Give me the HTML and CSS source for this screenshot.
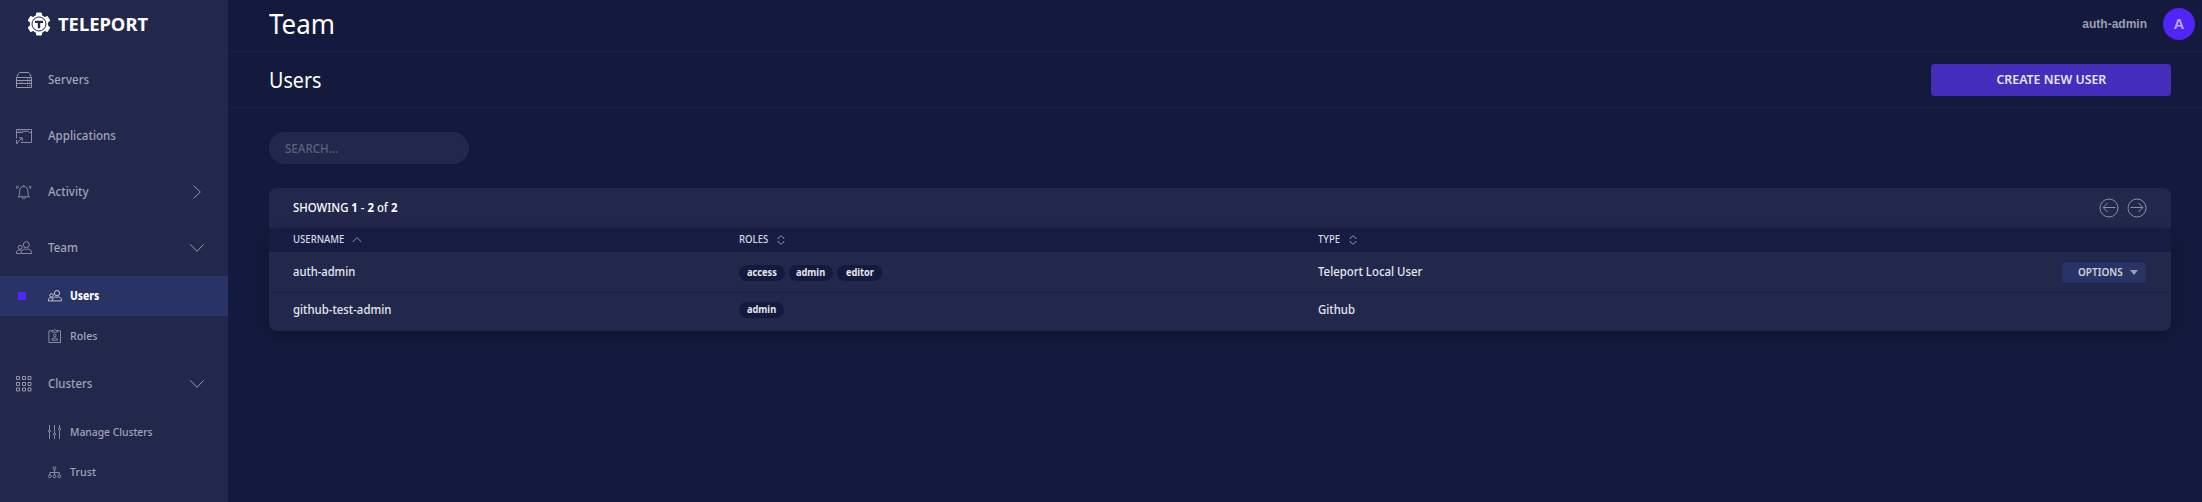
FILE: index.html
```
<!DOCTYPE html>
<html lang="en">
<head>
<meta charset="utf-8">
<title>Team</title>
<link rel="stylesheet" href="styles.css">
</head>
<body>
<svg class="defs" width="0" height="0">
  <symbol id="i-users" viewBox="0 0 16 16" fill="none" stroke="currentColor" stroke-width=".9">
    <circle cx="10.3" cy="4.7" r="3"/>
    <path d="M5.2 13.6v-1.3c0-2 2-3 3.700-3.300.8.5 2 .5 2.800 0 1.800.3 3.800 1.300 3.800 3.300v1.300z"/>
    <circle cx="4.100" cy="7.300" r="2"/>
    <path d="M5 13.600H.5v-1.300c0-1.400 1.200-2.100 2.600-2.400.6.4 1.500.4 2.100 0"/>
  </symbol>
  <symbol id="i-chevron" viewBox="0 0 14 14" fill="none" stroke="currentColor" stroke-width=".9">
    <path d="M.5 3.500 7 10.300l6.500-6.800"/>
  </symbol>
  <symbol id="i-sort" viewBox="0 0 8 10" fill="none" stroke="currentColor" stroke-width=".9">
    <path d="M1.100 4V3L4 .8 6.900 3v1M1.100 6v1L4 9.200 6.900 7V6"/>
  </symbol>
</svg>
<div class="app">
  <nav class="side">
    <div class="brand">
      <svg width="24" height="24" viewBox="0 0 24 24">
        <circle cx="12" cy="12" r="9.200" fill="#fff"/>
        <g fill="#fff">
          <rect id="tooth" x="9" y=".5" width="6" height="6" rx="1.200"/>
          <use href="#tooth" transform="rotate(60 12 12)"/>
          <use href="#tooth" transform="rotate(120 12 12)"/>
          <use href="#tooth" transform="rotate(180 12 12)"/>
          <use href="#tooth" transform="rotate(240 12 12)"/>
          <use href="#tooth" transform="rotate(300 12 12)"/>
        </g>
        <circle cx="12" cy="12" r="7" fill="none" stroke="#22274c" stroke-width="1"/>
        <path d="M8 8.700h8v2.300h-2.800v5.200h-2.400V11H8z" fill="#22274c"/>
      </svg>
      <span class="t logo">TELEPORT</span>
    </div>
    <a class="item">
      <svg width="16" height="16" viewBox="0 0 16 16" fill="none" stroke="currentColor" stroke-width="1"><path d="M.5 5.500h15v10H.5zM.5 8.500h15M.5 11.500h15M.8 5 2.500 1.500 3.500.5h9l1 1L15.200 5"/><path stroke-width=".8" d="M11 7h1m1 0h1m-3 3h1m1 0h1m-3 3.500h1m1 0h1M3.500 10h1m1 0h1"/></svg>
      <span class="t">Servers</span>
    </a>
    <a class="item">
      <svg width="16" height="16" viewBox="0 0 16 16" fill="none" stroke="currentColor" stroke-width=".9"><path d="M.5 10.500V1.500h15v13H4.500M.5 4.500h6l1.300-1.300h4.400l1.300 1.300h2M2 3h1m1 0h1m1 0h1M.8 15 6 10M3 9.800h3.300V13M.5 12v3.300H2"/></svg>
      <span class="t">Applications</span>
    </a>
    <a class="item">
      <svg width="16" height="16" viewBox="0 0 16 16" fill="none" stroke="currentColor" stroke-width=".9"><path d="M2 12.800h11.500c-1.400-1-1.600-2.300-1.600-5.300 0-3-1.500-5-4.150-5S3.600 4.500 3.600 7.500c0 3-.2 4.300-1.600 5.300zM6 13.200c.2 2 3.300 2 3.500 0M7.750 2.500V1M2.300 1.800C1.800 2.500 2 3.500 2.600 4M.6 1.800c-.2 1 .1 2.400.9 3.200M13.200 1.800c.5.7.3 1.700-.3 2.200m2-2.200c.2 1-.1 2.400-.9 3.200"/></svg>
      <span class="t">Activity</span>
      <svg class="arrow right" width="14" height="14"><use href="#i-chevron"/></svg>
    </a>
    <a class="item">
      <svg width="16" height="16"><use href="#i-users"/></svg>
      <span class="t">Team</span>
      <svg class="arrow" width="14" height="14"><use href="#i-chevron"/></svg>
    </a>
    <a class="sub active">
      <i class="mark"></i>
      <svg width="14" height="14"><use href="#i-users"/></svg>
      <span class="t">Users</span>
    </a>
    <a class="sub">
      <svg width="14" height="14" viewBox="0 0 14 14" fill="none" stroke="currentColor" stroke-width=".9"><path d="M4 1.800H.9v11.700h11.600V1.800H9.300M4 3.200V1.500h1.500c.2-1.200 2.200-1.200 2.400 0h1.500v1.700z"/><circle cx="6.700" cy="6.400" r="1.300"/><path d="M4 11.200V10c.6-1.400 4.800-1.400 5.400 0v1.200z"/></svg>
      <span class="t roles">Roles</span>
    </a>
    <a class="item">
      <svg width="16" height="16" viewBox="0 0 16 16" fill="none" stroke="currentColor" stroke-width="1"><path d="M.5.5h3v3h-3zM6.500.5h3v3h-3zM12 .5h3v3h-3zM.5 6.500h3v3h-3zM6.500 6.500h3v3h-3zM12 6.500h3v3h-3zM.5 12h3v3h-3zM6.500 12h3v3h-3zM12 12h3v3h-3z"/></svg>
      <span class="t clusters">Clusters</span>
      <svg class="arrow" width="14" height="14"><use href="#i-chevron"/></svg>
    </a>
    <a class="sub">
      <svg width="14" height="14" viewBox="0 0 14 14" fill="none" stroke="currentColor" stroke-width=".9"><path d="M1.500 0v5M1.500 7v7M6.500 0v8M6.500 10.200V14M11.500 0v3M11.500 5.200V14"/><circle cx="1.500" cy="6" r="1.100"/><circle cx="6.500" cy="9.100" r="1.100"/><circle cx="11.500" cy="4.100" r="1.100"/></svg>
      <span class="t manage">Manage Clusters</span>
    </a>
    <a class="sub">
      <svg width="14" height="14" viewBox="0 0 14 14" fill="none" stroke="currentColor" stroke-width=".9"><circle cx="6.500" cy="3.200" r="1.400"/><circle cx="1.900" cy="11.300" r="1.400"/><circle cx="6.500" cy="11.300" r="1.400"/><circle cx="11.300" cy="11.300" r="1.400"/><path d="M6.500 4.600v5.300M1.900 9.900V7.500h9.400v2.400"/></svg>
      <span class="t roles">Trust</span>
    </a>
  </nav>
  <main class="main">
    <header class="top">
      <h1 class="t">Team</h1>
      <div class="account"><span>auth-admin</span><b class="avatar">A</b></div>
    </header>
    <div class="head">
      <h2 class="t">Users</h2>
      <button class="create"><span class="t">CREATE NEW USER</span></button>
    </div>
    <div class="search"><span class="t">SEARCH...</span></div>
    <section class="panel">
      <div class="pager">
        <span class="t">SHOWING <b>1</b> - <b>2</b> of <b>2</b></span>
        <div class="nav">
          <svg width="20" height="20" viewBox="0 0 20 20" fill="none" stroke="currentColor"><circle cx="10" cy="10" r="9"/><path d="M16.500 9.500H4.500M8.500 5 4.200 9.500l4.300 4.500"/></svg>
          <svg width="20" height="20" viewBox="0 0 20 20" fill="none" stroke="currentColor"><circle cx="10" cy="10" r="9"/><path d="M3.500 9.500h12M11.500 5l4.300 4.500-4.300 4.500"/></svg>
        </div>
      </div>
      <div class="table">
        <div class="row thead">
          <div><span class="t">USERNAME</span><svg class="up" width="10" height="8" viewBox="0 0 10 8" fill="none" stroke="currentColor" stroke-width=".9"><path d="M.7 6 5 1.500 9.300 6"/></svg></div>
          <div><span class="t">ROLES</span><svg class="sort-roles" width="8" height="10"><use href="#i-sort"/></svg></div>
          <div><span class="t">TYPE</span><svg class="sort-type" width="8" height="10"><use href="#i-sort"/></svg></div>
          <div></div>
        </div>
        <div class="row first">
          <div><span class="t auth">auth-admin</span></div>
          <div class="pills"><span class="pill access"><span class="t">access</span></span><span class="pill admin"><span class="t">admin</span></span><span class="pill"><span class="t">editor</span></span></div>
          <div><span class="t">Teleport Local User</span></div>
          <div class="end"><button class="options"><span class="t">OPTIONS</span><i class="caret"></i></button></div>
        </div>
        <div class="row last">
          <div><span class="t">github-test-admin</span></div>
          <div class="pills"><span class="pill"><span class="t">admin</span></span></div>
          <div><span class="t">Github</span></div>
          <div></div>
        </div>
      </div>
    </section>
  </main>
</div>
</body>
</html>
```
FILE: styles.css
```
* { box-sizing: border-box; }
body {
  margin: 0;
  background: #141a3d;
  color: #fff;
  font: 13px/16px "Noto Sans", sans-serif;
}
.defs { position: absolute; }
.t {
  display: inline-block;
  white-space: nowrap;
  transform: scaleX(var(--s, .89));
  transform-origin: left center;
}
svg { flex: none; display: block; }
.app { display: flex; height: 502px; overflow: hidden; }

/* Sidebar */
.side { width: 228px; flex: none; background: #22274c; color: #a3a5b5; }
.side svg { opacity: .9; }
.brand { height: 52px; padding: 0 0 4px 27px; display: flex; align-items: center; gap: 7px; color: #fff; }
.brand svg { opacity: 1; }
.logo { --s: 1.05; font-size: 17.5px; font-weight: 700; line-height: 24px; padding-bottom: 1px; }
.item { height: 56px; padding: 0 24px 0 16px; display: flex; align-items: center; gap: 16px; }
.item .t, .sub .t { padding-bottom: 2px; font-weight: 500; }
.item .clusters { --s: .88; }
.arrow { margin-left: auto; color: #b5b7c4; }
.arrow.right { transform: rotate(-90deg); }
.sub { height: 40px; padding-left: 48px; display: flex; align-items: center; gap: 8px; font-size: 11.5px; position: relative; }
.sub .t { --s: .92; padding-bottom: 1px; }
.sub .roles { --s: .93; }
.sub .manage { --s: .895; }
.active { background: #2a3365; color: #fff; }
.active .t { font-weight: 800; --s: .9; }
.mark { position: absolute; left: 18px; top: 16px; width: 8px; height: 8px; background: #5124f8; }

/* Page headers */
.main { flex: 1; min-width: 0; }
.top { height: 52px; border-bottom: 1px solid #1b2145; padding: 0 7px 5px 41px; display: flex; align-items: center; justify-content: space-between; }
h1, h2 { margin: 0; font-weight: 400; }
h1 { --s: .925; font-size: 28px; line-height: 32px; }
.account { display: flex; align-items: center; gap: 16px; padding-top: 2px; font: 700 12px/16px "Liberation Sans", sans-serif; color: #9c9eac; }
.avatar { width: 32px; height: 32px; border-radius: 50%; background: #5124f8; color: #bba9fc; font-size: 15px; line-height: 32px; text-align: center; }
.head { height: 56px; border-bottom: 1px solid #1b2145; padding: 0 31px 0 41px; display: flex; align-items: center; justify-content: space-between; }
h2 { --s: .895; font-size: 22px; line-height: 28px; padding-bottom: 1px; }
button { border: 0; font: inherit; }
.create { width: 240px; height: 32px; margin-top: 1px; border-radius: 4px; background: #452dbb; color: #e8e4f8; font-size: 12px; font-weight: 600; padding: 0 0 1px; }
.create .t { --s: 1.03; transform-origin: center; }
.search { width: 200px; height: 32px; margin: 24px 0 0 41px; border-radius: 16px; background: #22274c; color: #5c607b; padding: 8px 16px; }
.search .t { --s: .89; font-weight: 500; }

/* Users table */
.panel { margin: 24px 31px 0 41px; border-radius: 8px; }
.pager { height: 40px; background: #22274c; border-radius: 8px 8px 0 0; padding: 0 24px; display: flex; align-items: center; justify-content: space-between; font-weight: 500; }
.pager .t { --s: .875; padding-bottom: 2px; }
.nav { display: flex; gap: 8px; color: #8c8fa3; }
.table { border-radius: 8px; box-shadow: 0 4px 16px rgba(0, 0, 0, .24); }
.row { display: grid; grid-template-columns: 446px 579px 1fr auto; padding: 0 24px; align-items: center; background: #22274c; color: #e6e7ec; }
.row > div { display: flex; align-items: center; }
.thead { height: 24px; background: #171c43; font-size: 10.5px; color: #d8d9e1; }
.thead .t { --s: .91; padding-bottom: 2px; font-weight: 500; }
.thead svg { color: #9a9cae; }
.up { margin-left: 2px; }
.sort-roles { margin-left: 6px; }
.sort-type { margin-left: 7px; }
.first { height: 41px; border-bottom: 1px solid #1b2045; }
.first .t, .last .t { font-weight: 500; padding-bottom: 2px; --s: .875; }
.first .auth { --s: .86; }
.row .pills { gap: 4px; }
.first .pills { padding-top: 2px; }
.last { height: 38px; padding-bottom: 5px; border-radius: 0 0 8px 8px; }
.last .pills { padding-top: 1px; }
.pill { width: 45px; height: 16px; border-radius: 8px; background: #141a3d; display: flex; justify-content: center; font-size: 10.5px; line-height: 15px; }
.pill.access { width: 46px; }
.pill.admin { width: 44px; }
.row .pill .t { transform-origin: center; font-weight: 700; --s: .88; padding: 0; }
.options { width: 86px; height: 23px; border: 1px solid #1d2350; border-radius: 4px; background: #2a3365; color: #d0d2de; display: flex; align-items: center; padding: 0 0 0 16px; font-size: 10px; }
.row .options .t { --s: 1; font-weight: 600; padding: 0; }
.caret { margin-left: 7px; border: 4px solid transparent; border-top: 5px solid #9a9db5; border-bottom: 0; }
```
